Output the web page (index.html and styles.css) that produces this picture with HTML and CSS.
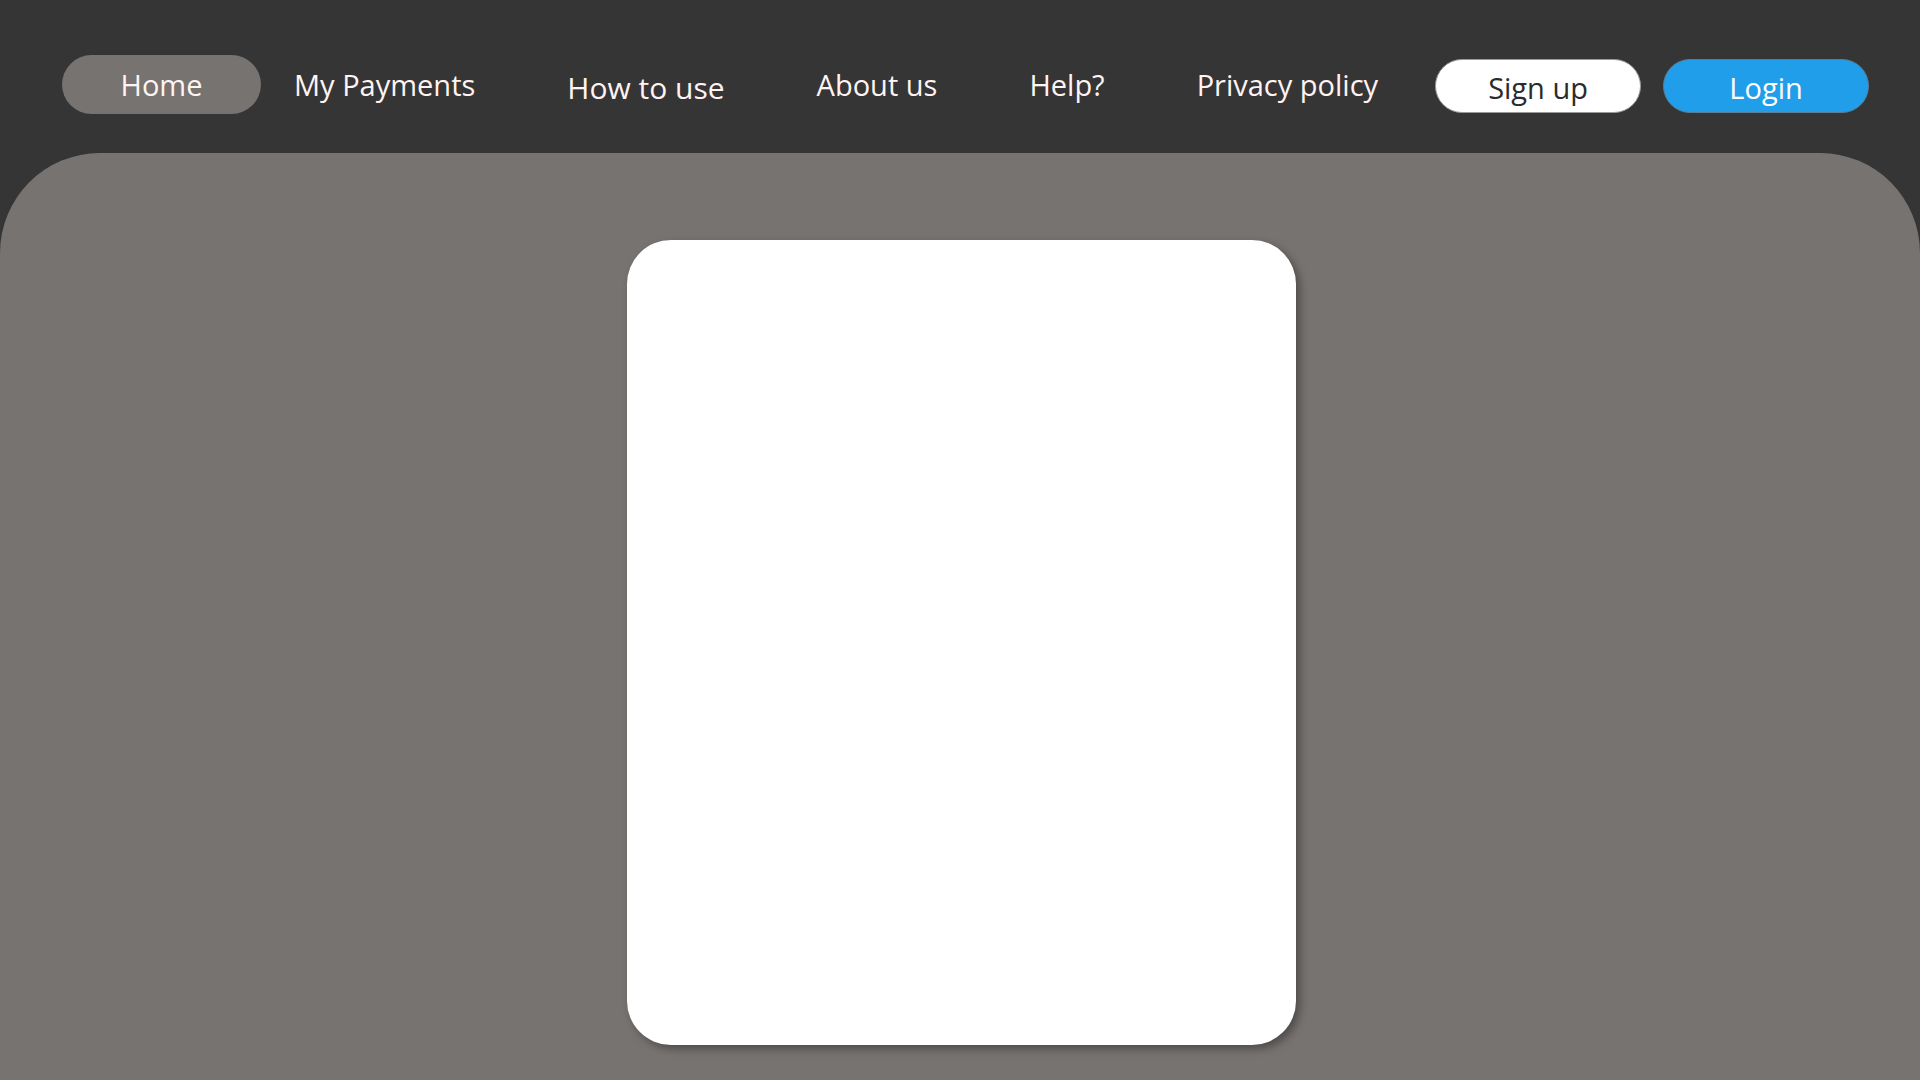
FILE: index.html
```html
<!DOCTYPE html>
<html lang="en">
<head>
<meta charset="utf-8">
<title>Home</title>
<link rel="stylesheet" href="styles.css">
</head>
<body>
<header class="topbar">
  <a class="home-pill" href="#">Home</a>
  <ul class="links">
    <li><a href="#">My Payments</a></li>
    <li><a class="low" href="#">How to use</a></li>
    <li><a href="#">About us</a></li>
    <li><a href="#">Help?</a></li>
    <li><a href="#">Privacy policy</a></li>
  </ul>
  <div class="actions">
    <button class="btn btn-signup">Sign up</button>
    <button class="btn btn-login">Login</button>
  </div>
</header>
<main class="stage">
  <section class="card"></section>
</main>
</body>
</html>
```
FILE: styles.css
```css
* { box-sizing: border-box; }
html, body { margin: 0; padding: 0; }
body {
  width: 1920px;
  height: 1080px;
  overflow: hidden;
  background: #353535;
  font-family: "Open Sans", "Noto Sans", sans-serif;
}
.topbar {
  height: 153px;
  display: flex;
  align-items: center;
  padding: 17px 0 0 62px;
}
.home-pill {
  width: 199px;
  height: 59px;
  border-radius: 30px;
  background: #767371;
  color: #fff3f3;
  text-decoration: none;
  font-size: 29px;
  display: flex;
  align-items: center;
  justify-content: center;
  margin-top: -1px;
}
.links {
  list-style: none;
  margin: 0 0 0 33px;
  padding: 0;
  display: flex;
  gap: 92px;
}
.links a {
  color: #fff3f3;
  text-decoration: none;
  font-size: 29px;
}
.links a.low { position: relative; top: 2px; font-size: 30px; }
.actions {
  margin-left: 57px;
  display: flex;
  gap: 22px;
  margin-top: 2px;
}
.btn {
  width: 206px;
  height: 54px;
  border-radius: 27px;
  font-family: inherit;
  font-size: 29px;
  padding: 3px 0 0;
  cursor: pointer;
}
.btn-signup {
  background: #ffffff;
  color: #2b2b2b;
  border: 1px solid #9a9a9a;
}
.btn-login {
  background: #209ee9;
  color: #ffffff;
  border: 1px solid #5a7c96;
}
.stage {
  height: 927px;
  background: #777371;
  border-radius: 100px 100px 0 0;
  padding-top: 87px;
  display: flex;
  justify-content: center;
}
.card {
  width: 669px;
  height: 805px;
  background: #ffffff;
  border-radius: 44px;
  box-shadow: 4px 4px 8px rgba(0, 0, 0, 0.35);
  margin-left: 3px;
}
```
